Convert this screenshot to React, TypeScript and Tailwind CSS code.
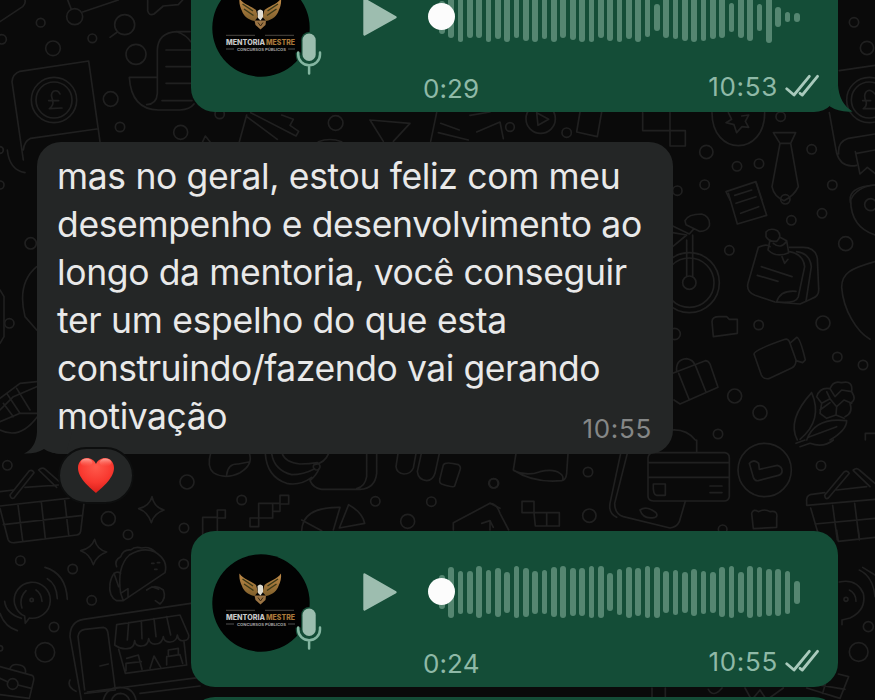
import React from "react";

interface DoodleTile {
  x: number;
  y: number;
  dots: [number, number, number][];
  lines: string[];
}

// Wallpaper tiles, every tile is drawn at 3x and scaled down
const tiles: DoodleTile[] = [
  {
    x: 0,
    y: 0,
    dots: [
      [122, 68, 13], [224, 50, 24], [277, 115, 13], [374, 74, 30], [408, 163, 30], [159, 145, 22],
      [332, 297, 22], [360, 381, 14], [542, 397, 21], [5, 118, 14], [162, 300, 68], [162, 300, 54], [0, 450, 10],
    ],
    lines: [
      "M75 0Q78 10 68 20L0 65",
      "M203 0L214 28M248 36L355 0M352 96L330 112",
      "M443 0V32Q446 48 462 42L490 18L535 14L548 0",
      "M36 245Q38 222 60 214L266 183L300 425M36 245L70 480M70 450Q72 425 92 415L290 387",
      "M180 282Q174 268 160 274Q150 282 158 300Q162 316 148 326L186 324M146 302H176",
      "M570 95H530Q474 98 472 150V280Q470 312 440 314M470 232H388Q394 328 475 330H540Q570 328 582 312M530 95Q560 105 572 125",
      "M498 150H572M498 200H572M498 250H572M486 302H576",
    ],
  },
  {
    x: 190,
    y: 0,
    dots: [[89, 342, 14], [437, 369, 22]],
    lines: [
      "M182 338L318 408L326 394L300 376L310 358L275 345M170 350L262 418M170 345L148 425",
      "M540 360L660 370L610 424M540 360L580 424M740 338L722 424M752 370L808 390M745 398L835 420",
      "M38 425L46 408L60 425M385 425Q420 412 455 425",
    ],
  },
  {
    x: 470,
    y: 112,
    dots: [[212, 20, 44], [290, 62, 14], [120, 45, 13]],
    lines: ["M200 2L236 22L204 40Z", "M0 10L60 0M20 60L90 30L100 80", "M330 0L320 60L382 74L395 0"],
  },
  {
    x: 640,
    y: 0,
    dots: [
      [642, 67, 14], [681, 144, 20], [422, 350, 14], [199, 456, 20], [291, 499, 14], [357, 491, 14],
      [515, 448, 14], [194, 554, 14], [577, 555, 14], [112, 572, 14], [688, 300, 68], [688, 300, 54],
    ],
    lines: [
      "M8 338V392H136V438H90V338",
      "M216 338C216 470 374 470 374 338",
      "M265 338L275 358L258 368L282 374L290 398L306 380L326 382L316 364L326 345L305 348",
      "M400 398H467L452 430L475 560Q462 588 432 602Q402 590 396 560L420 430ZM420 430H452",
      "M598 212L705 196M568 338L590 460Q604 506 650 496M705 402L625 415Q592 426 596 462",
      "M646 455L660 522L682 502L705 520M650 460L705 450M705 555Q650 560 632 600",
      "M705 282Q690 264 678 276Q670 288 678 304Q682 318 670 326H705M668 302H692",
      "M258 575L348 545L366 600M258 575L270 600M284 586L335 570",
    ],
  },
  {
    x: 660,
    y: 150,
    dots: [[376, 148, 14]],
    lines: ["M205 130L232 222L320 196L288 98M228 160L288 140M242 190L296 170", "M645 105Q560 110 572 160"],
  },
  {
    x: 660,
    y: 200,
    dots: [
      [394, 61, 14], [486, 40, 14], [208, 151, 14], [557, 131, 21], [296, 375, 14], [489, 369, 21],
      [532, 471, 14], [609, 495, 14], [224, 588, 21], [300, 638, 21], [174, 702, 14], [44, 402, 17],
      [88, 248, 90], [88, 248, 74], [88, 248, 20], [632, 14, 18],
    ],
    lines: [
      "M80 120V228M98 105V230M38 78L88 102L102 86M38 140L80 105L38 98M75 62Q84 42 125 42Q152 50 148 78Q140 95 118 94L78 74Z",
      "M295 142Q320 130 330 140M295 142L264 250Q258 275 285 286L345 306L420 312L455 296Q478 290 476 266L472 175Q466 142 430 142H388",
      "M388 155Q430 162 434 200L415 290Q408 312 350 306Q360 270 408 274M410 155Q450 160 454 200L438 304",
      "M318 96Q330 82 352 92Q368 108 350 124Q326 126 318 110ZM330 120L324 150Q350 175 386 158L380 122L360 112M340 130Q362 148 378 126M366 170L374 190L384 178",
      "M304 200L396 230M292 226L354 244",
      "M156 365Q156 350 178 350H200L208 358H232V400L160 410Z",
      "M282 462Q282 450 375 418Q386 415 390 430L408 480Q408 498 395 504L326 536Q310 538 304 525ZM392 428L410 412Q420 412 436 480L428 488L408 482",
      "M38 520L136 482Q145 482 150 492L174 562L60 612L42 600M50 516Q46 478 80 476Q100 480 104 494M56 520L88 600M106 496L138 576",
      "M572 0C572 55 600 90 645 105M645 185C570 206 545 220 545 262C550 330 590 395 630 418",
      "M455 578Q380 660 412 720M455 578Q490 660 420 718M440 720Q465 650 560 662Q560 690 510 720M445 712L530 680",
      "M470 590Q480 560 510 566Q520 540 545 548Q580 540 575 575Q592 600 570 610Q580 640 555 650M470 590L485 610L480 640L500 655L528 645L552 655M485 610L510 596L530 620L552 600L575 610M510 566L525 590L545 570L575 575M528 645L530 620M500 575L510 596M480 630L510 608",
      "M645 700H616V720M38 690Q80 688 106 720",
    ],
  },
  {
    x: 0,
    y: 150,
    dots: [[0, 105, 12], [92, 280, 17], [28, 520, 14]],
    lines: [
      "M22 0Q28 60 75 68M110 350Q50 400 75 500L110 540M0 420L12 440V560L0 580",
      "M0 745L60 700L110 695M0 780L40 740L110 710M0 815L60 790L112 790M20 730L60 790M50 715L90 780M0 840Q60 870 112 800M10 760L40 800",
    ],
  },
  {
    x: 0,
    y: 400,
    dots: [
      [22, 196, 14], [561, 246, 21], [325, 356, 21], [384, 404, 14], [552, 384, 14], [61, 482, 14],
      [218, 507, 14], [551, 492, 14], [275, 601, 14], [162, 681, 14], [135, 757, 29], [0, 745, 8], [95, 600, 5],
      [38, 852, 16],
    ],
    lines: [
      "M30 285L88 212Q98 208 102 218L42 294Q32 298 30 285ZM116 210Q126 200 136 208L184 250M116 210L170 262M0 275L40 270M75 262L175 255M0 318L250 290M0 325L24 418Q28 430 44 428L230 405Q240 404 242 394L252 310M54 315L68 422M124 306L136 416M194 300L206 404M10 374L248 346",
      "M456 290Q462 322 492 330Q462 340 454 368Q444 336 416 326Q448 318 456 290Z",
      "M284 418Q290 448 320 456Q290 466 280 494Q270 462 242 452Q274 446 284 418Z",
      "M44 612A54 54 0 1 1 88 654L76 670L74 648Q52 640 44 612M66 624Q56 595 78 572M108 570Q124 580 126 604M135 502Q198 520 202 598M142 536Q170 552 172 596M14 604Q18 640 64 655M0 640Q14 680 52 692",
      "M370 602L495 518Q505 480 465 456Q430 440 388 465Q350 500 362 580ZM362 520Q340 505 330 550Q325 590 350 602L370 602M350 500Q342 480 362 470Q370 448 392 450Q405 438 425 444Q450 438 468 458M342 520L356 560M362 580L384 566V592M440 570Q465 550 490 570Q500 595 480 612L466 602M456 560L476 568",
      "M455 490H462M472 488H479M464 508H471",
      "M244 900L210 710Q210 665 250 658L572 610M254 870L234 710Q236 690 255 688L310 682Q322 684 324 700L346 870L254 880M300 798L325 792M210 840Q200 860 228 874",
      "M350 674L540 645L566 705Q568 722 550 722Q535 724 532 705Q530 724 512 726Q492 728 490 710Q486 732 468 732Q450 734 446 716Q444 738 425 738Q406 740 404 722Q402 746 382 746Q362 748 344 735L350 674M386 668L382 720M424 662L426 716M462 656L468 710M500 650L512 705",
      "M356 748L376 820L560 795L552 725M380 775L415 765L426 808M378 812V790L424 785M450 805L462 768L482 802M500 795V770L540 764L548 790M505 765V750L535 745V764",
      "M262 876L600 832M310 900Q320 862 360 862Q400 862 408 900M335 900Q342 880 362 880Q382 882 388 900M420 880L600 858",
      "M0 800L96 826Q104 830 100 845L88 895L0 884M0 835L24 846M54 855L94 865M30 805Q38 788 62 796Q80 802 76 820",
    ],
  },
  {
    x: 200,
    y: 440,
    dots: [[125, 180, 14], [526, 184, 14], [694, 185, 14], [623, 244, 21], [880, 130, 14], [350, 80, 10]],
    lines: [
      "M32 40Q20 80 40 98Q75 120 120 98Q160 75 148 40M80 104Q84 70 115 72L146 66",
      "M196 40Q200 110 260 130Q300 138 335 112M215 40Q222 90 275 104Q310 104 344 86M246 40Q256 68 300 72Q330 72 352 68M344 74Q375 68 386 40M358 84Q350 105 330 122Q340 145 365 148H480Q525 146 530 100V40M500 40V110Q495 140 470 146",
      "M594 40L588 80Q590 100 612 102Q632 102 640 84L648 40M664 40L652 95Q655 120 680 122Q698 122 705 100L718 40M730 75Q736 64 775 74Q784 80 780 90L764 138Q760 144 725 132Q716 128 720 115Z",
      "M8 300V232H52V210H76V234H52V300M150 234H176V260H150ZM176 190H218V234H176ZM218 190H240V214H218M240 166H266V192H240Z",
      "M305 272Q308 200 420 202L400 270M305 240L365 272M446 194Q488 218 494 250L418 264Z",
      "M760 270V248L870 190L900 205M845 250L870 242L880 262M870 242V270",
    ],
  },
  {
    x: 490,
    y: 440,
    dots: [[12, 130, 14], [294, 96, 14], [298, 227, 20], [993, 77, 14], [698, 268, 13], [824, 90, 80]],
    lines: [
      "M78 40L70 90Q130 130 215 122Q228 120 230 100L234 40M72 92Q110 110 150 95Q190 85 210 100Q222 108 218 120",
      "M392 40L360 190Q355 220 380 232M412 40L374 190Q374 222 400 230L540 264Q560 262 568 245L586 184M450 210Q470 196 498 218Q505 228 495 232Q460 240 450 210M620 0V36",
      "M490 38H705Q718 40 718 54V170Q716 183 702 183H490Q474 182 474 168V54Q476 38 490 38ZM474 68H718M474 112H718M490 132H526V166H500Q488 164 490 132M660 138H696M660 158H696",
      "M778 70Q792 56 806 70L808 88L862 76Q878 80 876 96Q874 104 865 106L805 122Q795 124 790 112Z",
      "M96 184H132V218H96ZM132 218H208V258H136ZM170 220V256M0 190Q20 190 30 220L56 270",
      "M785 220Q790 205 805 215Q825 205 840 215Q865 210 860 235V262L790 266Z",
      "M1004 166L1062 96Q1072 90 1078 100L1015 174Q1006 180 1004 166ZM1090 90Q1100 82 1108 90L1155 130M1090 92L1140 140M1004 158L960 164Q948 168 950 186V196L1155 178M1040 150L1130 140M962 204L990 300M1028 196L1042 300M1094 190L1108 300M975 252L1155 235M918 10L945 0M930 20L960 10Q1000 25 1030 0",
    ],
  },
  {
    x: 640,
    y: 530,
    dots: [[618, 208, 6], [656, 366, 28], [685, 290, 15]],
    lines: [
      "M590 0L595 34L705 22M655 0L658 26M598 156Q650 145 670 190Q680 240 630 264L606 270V284M658 120Q700 140 705 200M628 180Q648 190 648 214M668 112L705 135",
      "M500 474L600 505L626 440L595 432M510 460L615 478M556 462L548 490M36 474V510M76 474V510M315 474L335 510L360 480L380 510L430 474M205 478Q220 505 246 474",
    ],
  },
];

const waveTop = [
  33, 41, 49, 41, 41, 49, 43, 50, 41, 48, 50, 43, 49, 41, 45, 50, 50, 41, 48, 50, 44, 49, 40, 27, 41, 43, 48, 50, 48,
  44, 41, 29, 41, 48, 27, 51, 20, 10, 9,
];
const waveBottom = [
  34, 51, 43, 43, 52, 44, 49, 41, 52, 49, 43, 44, 50, 52, 48, 48, 52, 52, 38, 46, 51, 48, 52, 51, 42, 45, 41, 47, 43,
  41, 50, 52, 41, 52, 50, 47, 47, 43, 23,
];

const message = [
  { text: "mas no geral, estou feliz com meu", spacing: "tracking-[-0.34px]" },
  { text: "desempenho e desenvolvimento ao", spacing: "tracking-[-0.36px]" },
  { text: "longo da mentoria, você conseguir", spacing: "tracking-[-0.36px]" },
  { text: "ter um espelho do que esta", spacing: "tracking-[-0.3px]" },
  { text: "construindo/fazendo vai gerando", spacing: "tracking-[-0.45px]" },
  { text: "motivação", spacing: "tracking-[-0.45px]" },
];

const Wallpaper = () => (
  <svg className="absolute inset-0" width="875" height="700" fill="none" stroke="#202020" strokeWidth="5" strokeLinejoin="round" strokeLinecap="round">
    {tiles.map((tile, i) => (
      <g key={i} transform={`translate(${tile.x} ${tile.y}) scale(0.33333)`}>
        {tile.dots.map(([cx, cy, r], j) => (
          <circle key={j} cx={cx} cy={cy} r={r} />
        ))}
        {tile.lines.map((d, j) => (
          <path key={j} d={d} />
        ))}
      </g>
    ))}
  </svg>
);

const Avatar = () => (
  <svg width="98" height="98" viewBox="0 0 98 98" className="block">
    <defs>
      <linearGradient id="gold" x1="0" y1="0" x2="0" y2="1">
        <stop offset="0" stopColor="#c08a48" />
        <stop offset="1" stopColor="#80602c" />
      </linearGradient>
    </defs>
    <circle cx="49" cy="49" r="48.7" fill="#020202" />
    {/* Eagle */}
    <path d="M27.5 19.5C31 25 39 27 44 31L46 38L42.5 42C36 41 31 36 30 32C28 28 27 24 27.5 19.5Z" fill="url(#gold)" />
    <path d="M69 19.5C65.5 25 57.5 27 52.5 31L50.5 38L54 42C60.5 41 65.5 36 66.5 32C68.5 28 69.5 24 69 19.5Z" fill="url(#gold)" />
    <path d="M30.5 25L41 32M32 30L41.5 36.5M66 25L55.5 32M64.5 30L55 36.5" stroke="#3d3a18" strokeWidth="1.5" />
    <path d="M42.5 41.5H54L53.5 46L48.5 50.5L43.5 46Z" fill="#9b7444" />
    <path d="M45.5 32Q48 29 51 32L51 38L48.5 41.5L46 39Z" fill="#e0ddd2" />
    <path d="M46 43.5L48.5 47L51 43.5" stroke="#392812" fill="none" />
    <path d="M14 56.3H43M53 56.3H82" stroke="#55504a" strokeWidth="0.9" />
    <text x="14" y="65.6" fontSize="7" fontWeight="800" fontFamily="Inter, sans-serif" fill="#c8c8c8" textLength="39" lengthAdjust="spacingAndGlyphs">MENTORIA</text>
    <text x="54" y="65.6" fontSize="7" fontWeight="800" fontFamily="Inter, sans-serif" fill="#a9783a" textLength="29" lengthAdjust="spacingAndGlyphs">MESTRE</text>
    <path d="M14 70H22M76 70H83" stroke="#5a5a5a" strokeWidth="0.9" />
    <text x="25" y="71.5" fontSize="3.6" fontWeight="700" fontFamily="Inter, sans-serif" fill="#a5a5a5" textLength="49" lengthAdjust="spacingAndGlyphs">CONCURSOS PÚBLICOS</text>
  </svg>
);

const Mic = () => (
  <svg width="30" height="45" viewBox="0 0 30 45" className="absolute left-[82px] top-[53px]">
    <rect x="7.2" y="0" width="16" height="31.5" rx="8" fill="#144d37" />
    <path d="M4.2 20.5V22.4A10.9 10.9 0 0 0 26 22.4V20.5" fill="none" stroke="#144d37" strokeWidth="5" />
    <path d="M4.2 20.5V22.4A10.9 10.9 0 0 0 26 22.4V20.5M15.1 33.5V41.5" fill="none" stroke="#84b6a1" strokeWidth="2.5" strokeLinecap="round" />
    <rect x="8.5" y="1.6" width="13.2" height="27.4" rx="6.6" fill="#9bbdae" />
  </svg>
);

const DoubleCheck = () => (
  <svg width="34" height="23" viewBox="0 0 34 23" className="mt-[2px]" fill="none" stroke="#a9cabc" strokeWidth="2.8" strokeLinecap="round" strokeLinejoin="round">
    <path d="M1.7 14.8L9 21L24.3 2.3M15 19.3L17.3 21L32.5 2.3" />
  </svg>
);

interface VoiceMessageProps {
  bars: number[];
  duration: string;
  time: string;
  tail?: boolean;
}

const VoiceMessage: React.FC<VoiceMessageProps> = ({ bars, duration, time, tail }) => (
  <div className="relative flex h-[156px] w-[647px] shrink-0 rounded-[24px] bg-[#144d37] pl-[21px] pt-[23px]">
    <div className="relative h-[98px] w-[98px] shrink-0">
      <Avatar />
      <Mic />
    </div>
    <svg width="36" height="40" viewBox="0 0 36 40" className="ml-[52px] mt-[18px] shrink-0">
      <path d="M2.5 2.5L33.5 20.2L2.5 37.5Z" fill="#9dbdaf" stroke="#9dbdaf" strokeWidth="2.4" strokeLinejoin="round" />
    </svg>
    <div className="ml-[24px] w-[397px] shrink-0">
      <div className="relative flex h-[76px] items-center gap-[3.67px] pl-[17px]">
        {bars.map((h, i) => (
          <span key={i} className="w-[5.7px] shrink-0 rounded-full bg-[#558671]" style={{ height: h }} />
        ))}
        <span className="absolute left-[6px] top-[24px] h-[27px] w-[27px] rounded-full bg-[#fcfcfc]" />
      </div>
      <div className="flex items-start justify-between text-[26px] leading-[30px] text-[#8fb9a7]">
        <span className="mt-[19px] pl-px tracking-[0.1px]">{duration}</span>
        <span className="mt-[17px] flex items-start gap-[7px]">
          <span className="tracking-[0.7px]">{time}</span>
          <DoubleCheck />
        </span>
      </div>
    </div>
    {tail && (
      <svg width="40" height="30" viewBox="0 0 40 30" className="absolute bottom-0 right-[-15px]">
        <path d="M17 24.5Q26 30.5 39.5 29.5Q26 21 25 3L18 8Z" fill="#144d37" />
      </svg>
    )}
  </div>
);

export default function App() {
  return (
    <div className="relative h-[700px] w-[875px] overflow-hidden bg-[#0a0a0a] font-['Inter',sans-serif]">
      <Wallpaper />

      <div className="relative flex flex-col pl-[191px]">
        <div className="-mt-[44px]">
          <VoiceMessage bars={waveTop} duration="0:29" time="10:53" tail />
        </div>

        {/* Incoming message */}
        <div className="relative -ml-[154px] mt-[30px] h-[312px] w-[636px] rounded-[24px] bg-[#242626] pl-[20px] pt-[11px]">
          <svg width="50" height="30" viewBox="0 0 50 30" className="absolute bottom-0 left-[-13px]">
            <path d="M13 0V8Q12 24 0 29.5Q12 30 20 25Q26 30 42 30L50 0Z" fill="#242626" />
          </svg>
          <div className="relative text-[35.5px] leading-[48px] text-[#e9e9e9]">
            {message.map((line) => (
              <p key={line.text} className="whitespace-nowrap">
                <span className={line.spacing}>{line.text}</span>
              </p>
            ))}
          </div>
          <span className="absolute bottom-[10px] right-[21px] text-[26px] leading-[30px] tracking-[0.7px] text-[#858787]">10:55</span>

          {/* Reaction */}
          <div className="absolute left-[21px] top-[305px] flex h-[57px] w-[76px] items-center justify-center rounded-full border-2 border-[#0d0e0e] bg-[#242626]">
            <svg width="38" height="37" viewBox="0 0 38 37">
              <defs>
                <radialGradient id="heart" cx="0.5" cy="0.25" r="0.75">
                  <stop offset="0" stopColor="#ff5a4c" />
                  <stop offset="0.6" stopColor="#f8382f" />
                  <stop offset="1" stopColor="#d81f1a" />
                </radialGradient>
                <linearGradient id="shine" x1="0" y1="0" x2="0" y2="1">
                  <stop offset="0" stopColor="#ffb0a6" stopOpacity="0.9" />
                  <stop offset="1" stopColor="#ff6a5c" stopOpacity="0" />
                </linearGradient>
              </defs>
              <path d="M19 36C15 32 1 22 1 11C1 5 5 1 10 1C14 1 17.5 3.5 19 7C20.5 3.5 24 1 28 1C33 1 37 5 37 11C37 22 23 32 19 36Z" fill="url(#heart)" />
              <ellipse cx="9.5" cy="5.5" rx="6" ry="4" fill="url(#shine)" />
              <ellipse cx="28.5" cy="5.5" rx="6" ry="4" fill="url(#shine)" />
            </svg>
          </div>
        </div>

        <div className="mt-[77px]">
          <VoiceMessage bars={waveBottom} duration="0:24" time="10:55" />
        </div>
        <div className="mt-[10px] h-[60px] w-[647px] rounded-t-[24px] bg-[#144d37]" />
      </div>
    </div>
  );
}
